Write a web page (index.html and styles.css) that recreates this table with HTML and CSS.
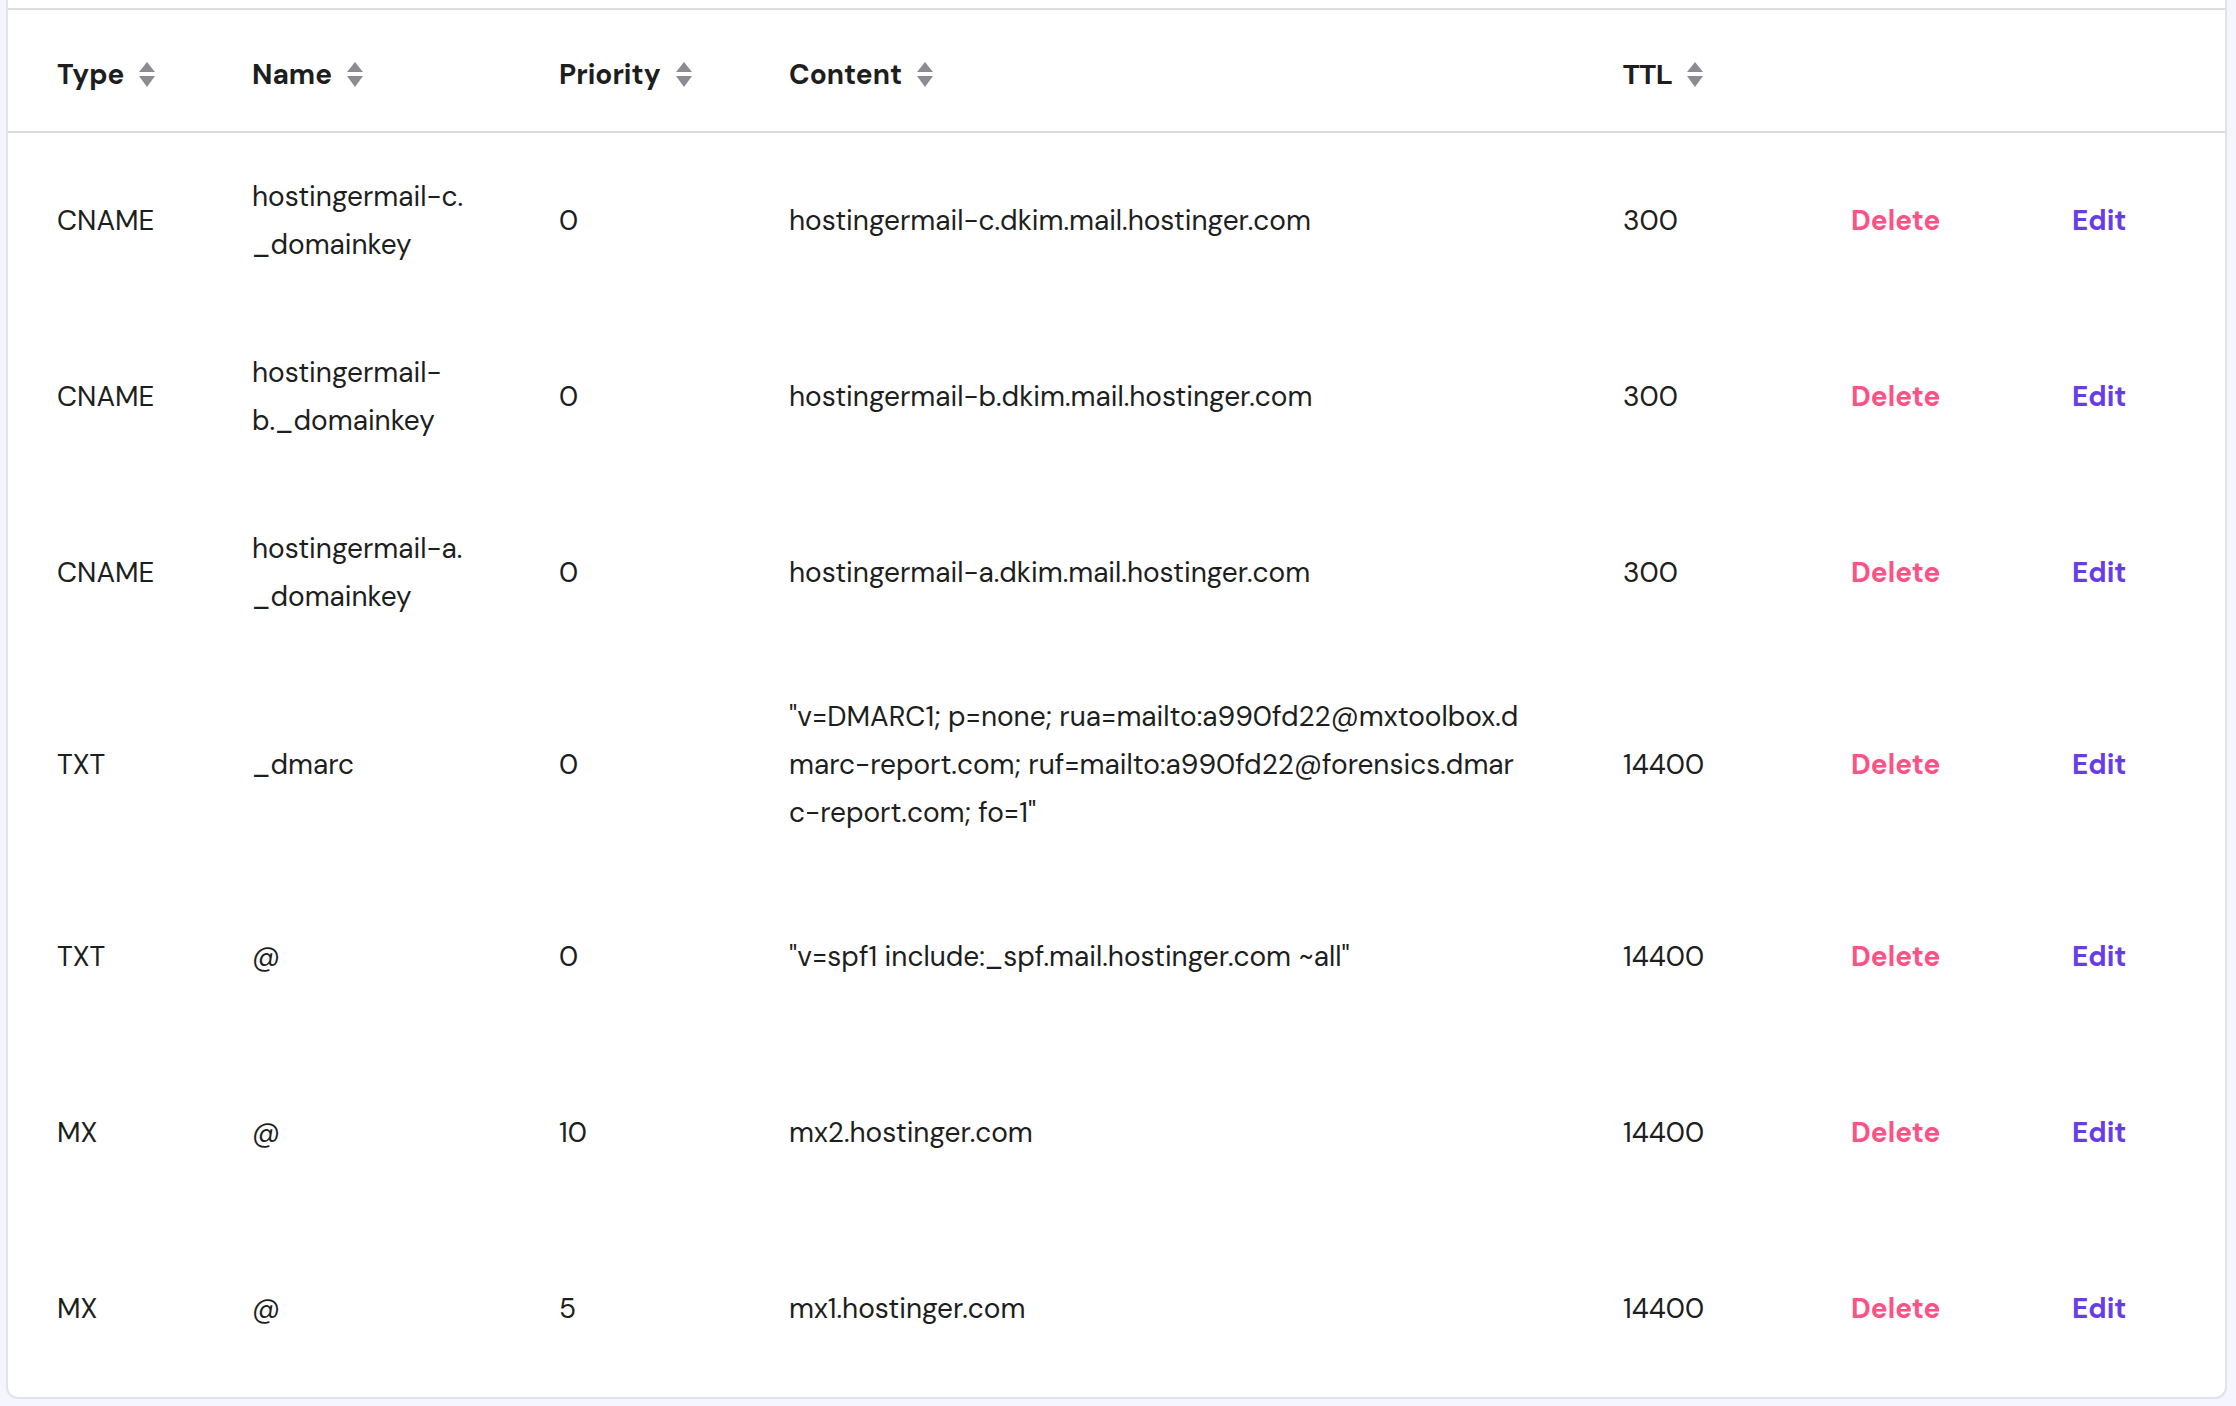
FILE: index.html
```html
<!DOCTYPE html>
<html lang="en">
<head>
<meta charset="utf-8">
<title>DNS records</title>
<link rel="stylesheet" href="styles.css">
</head>
<body>
<div class="card">
  <table class="dns">
    <colgroup>
      <col class="c-type"><col class="c-name"><col class="c-prio"><col class="c-content"><col class="c-ttl"><col class="c-del"><col class="c-edit">
    </colgroup>
    <thead>
      <tr class="head">
        <th class="first">Type<svg class="sort" viewBox="0 0 16 25" width="16" height="25"><polygon points="8,0 16,10 0,10"/><polygon points="0,14 16,14 8,25"/></svg></th>
        <th>Name<svg class="sort" viewBox="0 0 16 25" width="16" height="25"><polygon points="8,0 16,10 0,10"/><polygon points="0,14 16,14 8,25"/></svg></th>
        <th>Priority<svg class="sort" viewBox="0 0 16 25" width="16" height="25"><polygon points="8,0 16,10 0,10"/><polygon points="0,14 16,14 8,25"/></svg></th>
        <th>Content<svg class="sort" viewBox="0 0 16 25" width="16" height="25"><polygon points="8,0 16,10 0,10"/><polygon points="0,14 16,14 8,25"/></svg></th>
        <th><span class="ttl">TTL</span><svg class="sort" viewBox="0 0 16 25" width="16" height="25"><polygon points="8,0 16,10 0,10"/><polygon points="0,14 16,14 8,25"/></svg></th>
        <th></th>
        <th></th>
      </tr>
    </thead>
    <tbody>
      <tr class="row">
        <td class="first">CNAME</td>
        <td>hostingermail-c.<br>_domainkey</td>
        <td>0</td>
        <td>hostingermail-c.dkim.mail.hostinger.com</td>
        <td>300</td>
        <td><a class="del">Delete</a></td>
        <td><a class="edit">Edit</a></td>
      </tr>
      <tr class="row">
        <td class="first">CNAME</td>
        <td>hostingermail-<br>b._domainkey</td>
        <td>0</td>
        <td>hostingermail-b.dkim.mail.hostinger.com</td>
        <td>300</td>
        <td><a class="del">Delete</a></td>
        <td><a class="edit">Edit</a></td>
      </tr>
      <tr class="row">
        <td class="first">CNAME</td>
        <td>hostingermail-a.<br>_domainkey</td>
        <td>0</td>
        <td>hostingermail-a.dkim.mail.hostinger.com</td>
        <td>300</td>
        <td><a class="del">Delete</a></td>
        <td><a class="edit">Edit</a></td>
      </tr>
      <tr class="row">
        <td class="first">TXT</td>
        <td>_dmarc</td>
        <td>0</td>
        <td>"v=DMARC1; p=none; rua=mailto:a990fd22@mxtoolbox.d<br>marc-report.com; ruf=mailto:a990fd22@forensics.dmar<br>c-report.com; fo=1"</td>
        <td>14400</td>
        <td><a class="del">Delete</a></td>
        <td><a class="edit">Edit</a></td>
      </tr>
      <tr class="row">
        <td class="first">TXT</td>
        <td>@</td>
        <td>0</td>
        <td>"v=spf1 include:_spf.mail.hostinger.com ~all"</td>
        <td>14400</td>
        <td><a class="del">Delete</a></td>
        <td><a class="edit">Edit</a></td>
      </tr>
      <tr class="row">
        <td class="first">MX</td>
        <td>@</td>
        <td>10</td>
        <td>mx2.hostinger.com</td>
        <td>14400</td>
        <td><a class="del">Delete</a></td>
        <td><a class="edit">Edit</a></td>
      </tr>
      <tr class="row">
        <td class="first">MX</td>
        <td>@</td>
        <td>5</td>
        <td>mx1.hostinger.com</td>
        <td>14400</td>
        <td><a class="del">Delete</a></td>
        <td><a class="edit">Edit</a></td>
      </tr>
    </tbody>
  </table>
</div>
</body>
</html>
```
FILE: styles.css
```css
html, body {
  margin: 0;
  padding: 0;
  background: #f4f5ff;
}
body {
  font-family: "DM Sans", Inter, "Noto Sans", sans-serif;
  color: #1d1e20;
}
.card {
  box-sizing: border-box;
  margin-left: 6px;
  width: 2221px;
  background: #ffffff;
  border: 2px solid #e2e2ea;
  border-top: none;
  border-radius: 0 0 12px 12px;
  padding-top: 8px;
  overflow: hidden;
}
.dns {
  width: 100%;
  table-layout: fixed;
  border-collapse: separate;
  border-spacing: 0;
}
.c-type { width: 244px; }
.c-name { width: 307px; }
.c-prio { width: 230px; }
.c-content { width: 834px; }
.c-ttl { width: 228px; }
.c-del { width: 221px; }
.c-edit { width: 153px; }

.head { height: 125px; }
.dns th {
  text-align: left;
  font-weight: 700;
  font-size: 28px;
  line-height: 34px;
  padding: 9px 0 0 0;
  border-top: 2px solid #dcdce1;
  border-bottom: 2px solid #dcdce1;
  white-space: nowrap;
  vertical-align: middle;
}
.dns .first { padding-left: 49px; }
.ttl {
  font-family: "Liberation Sans", Arial, sans-serif;
  font-weight: 700;
  font-size: 27px;
}
.sort {
  display: inline-block;
  vertical-align: middle;
  margin-left: 15px;
  margin-top: -4px;
  fill: #8b8b94;
}
.row { height: 176px; }
.dns td {
  padding: 32px 0;
  font-size: 28px;
  line-height: 48px;
  vertical-align: middle;
  font-weight: 400;
}
.del, .edit {
  font-weight: 700;
  cursor: pointer;
}
.del { color: #fc5185; }
.edit { color: #673de6; }
```
